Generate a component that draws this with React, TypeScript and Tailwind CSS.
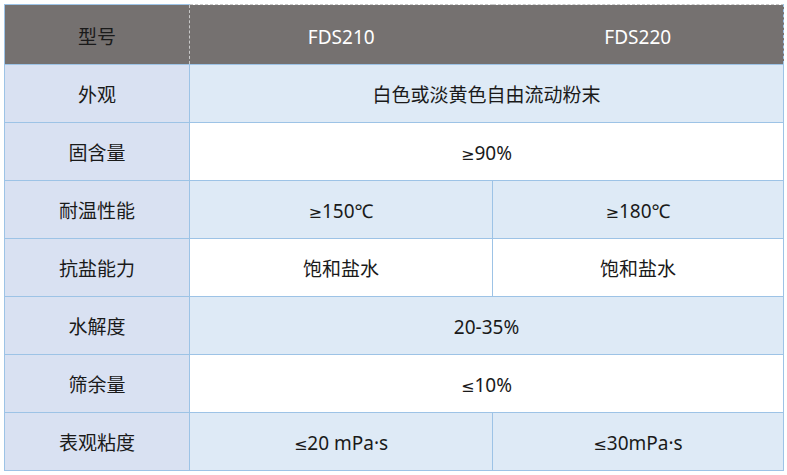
const rows: { label: string; a: string; b?: string; tint: boolean }[] = [
  { label: '外观', a: '白色或淡黄色自由流动粉末', tint: true },
  { label: '固含量', a: '≥90%', tint: false },
  { label: '耐温性能', a: '≥150℃', b: '≥180℃', tint: true },
  { label: '抗盐能力', a: '饱和盐水', b: '饱和盐水', tint: false },
  { label: '水解度', a: '20-35%', tint: true },
  { label: '筛余量', a: '≤10%', tint: false },
  { label: '表观粘度', a: '≤20 mPa·s', b: '≤30mPa·s', tint: true },
]

// the CJK font draws ≥ / ≤ slanted, so take them from DejaVu
function Val({ text }: { text: string }) {
  const sign = text[0] === '≥' || text[0] === '≤'
  if (!sign) return <>{text}</>
  return (
    <>
      <span style={{ fontFamily: '"DejaVu Sans", sans-serif' }} className="text-[16px]">{text[0]}</span>
      {text.slice(1)}
    </>
  )
}

export default function App() {
  return (
    <div
      className="w-[787px] h-[475px] bg-white pl-[4px] pt-[4px] text-[19px] text-[#1a1a1a]"
      style={{ fontFamily: '"Noto Sans", "Noto Sans CJK SC", sans-serif' }}
    >
      <table className="border-collapse table-fixed w-[779px]">
        <colgroup>
          <col className="w-[185px]" />
          <col className="w-[303px]" />
          <col className="w-[291px]" />
        </colgroup>
        <thead>
          <tr className="h-[60px] bg-[#757170]">
            <th className="pt-[6px] font-normal text-[#1a1a1a] border-l border-b border-[#9dc3e6] border-t border-t-[#9dc3e6]">型号</th>
            <th className="pt-[6px] font-normal text-white border-t border-dashed border-t-[#c8c8c8] border-l border-l-[#c8c8c8] border-b border-b-[#9dc3e6]">FDS210</th>
            <th className="pt-[6px] font-normal text-white border-t border-dashed border-t-[#c8c8c8] border-r border-r-[#9dc3e6] border-b border-b-[#9dc3e6]">FDS220</th>
          </tr>
        </thead>
        <tbody>
          {rows.map((r) => (
            <tr key={r.label} className="h-[58px]">
              <td className="pt-[4px] text-center bg-[#d9e1f2] border border-[#9dc3e6]">{r.label}</td>
              {r.b ? (
                <>
                  <td className={`pt-[4px] text-center border border-[#9dc3e6] ${r.tint ? 'bg-[#deeaf6]' : 'bg-white'}`}><Val text={r.a} /></td>
                  <td className={`pt-[4px] text-center border border-[#9dc3e6] ${r.tint ? 'bg-[#deeaf6]' : 'bg-white'}`}><Val text={r.b} /></td>
                </>
              ) : (
                <td colSpan={2} className={`pt-[4px] text-center border border-[#9dc3e6] ${r.tint ? 'bg-[#deeaf6]' : 'bg-white'}`}><Val text={r.a} /></td>
              )}
            </tr>
          ))}
        </tbody>
      </table>
    </div>
  )
}
